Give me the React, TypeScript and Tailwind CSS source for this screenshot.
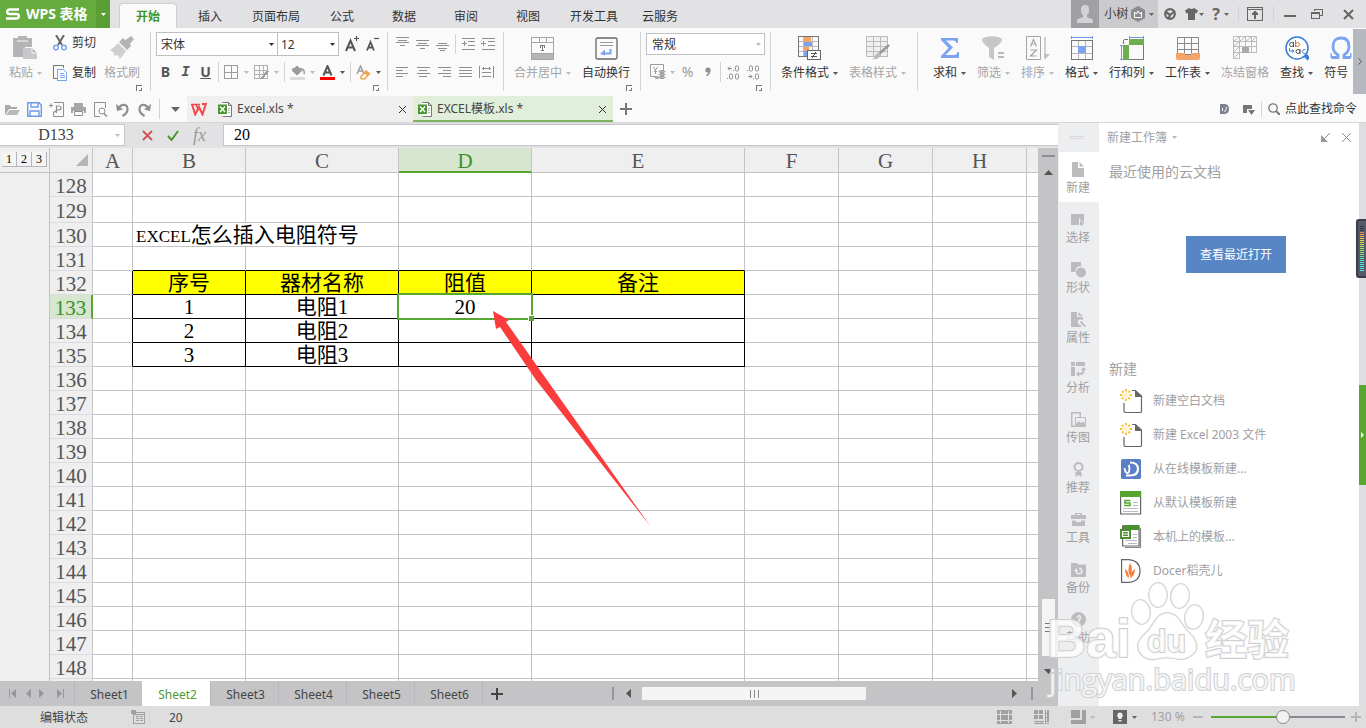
import React, { useState } from 'react';

interface IconProps {
  w?: number;
  h?: number;
  className?: string;
  crisp?: boolean;
  children: React.ReactNode;
}

const Icon: React.FC<IconProps> = ({ w = 15, h = 15, className = '', crisp = false, children }) => (
  <svg
    width={w}
    height={h}
    viewBox={`0 0 ${w} ${h}`}
    fill="none"
    stroke="currentColor"
    aria-hidden="true"
    shapeRendering={crisp ? 'crispEdges' : 'auto'}
    className={`shrink-0 ${className}`}
  >
    {children}
  </svg>
);

const Caret = ({ className = 'text-[#666]' }: { className?: string }) => (
  <svg width="5" height="3" viewBox="0 0 5 3" aria-hidden="true" className={`shrink-0 ${className}`}>
    <path d="M0 0h5L2.5 3z" fill="currentColor" />
  </svg>
);

const Sep = ({ className = 'h-5' }: { className?: string }) => <span className={`w-px shrink-0 bg-[#d3d3d5] ${className}`} />;

const Launcher = () => (
  <button aria-label="更多设置" className="absolute bottom-[5px] right-2 text-[#777]">
    <Icon w={6} h={6} crisp>
      <path d="M0 .5h6M.5 0v6M3 5.5h3M5.5 3v3" />
    </Icon>
  </button>
);

/* ---------- Title bar ---------- */

const menuTabs = [
  { label: '开始', cls: 'mr-[2px] w-[58px] rounded-t-sm border border-b-0 border-[#cfcfd2] bg-[#fafafa] font-bold text-[#3f9423]' },
  { label: '插入', cls: 'w-[62px]' },
  { label: '页面布局', cls: 'w-[70px]' },
  { label: '公式', cls: 'w-[62px]' },
  { label: '数据', cls: 'w-[62px]' },
  { label: '审阅', cls: 'w-[62px]' },
  { label: '视图', cls: 'w-[62px]' },
  { label: '开发工具', cls: 'w-[70px]' },
  { label: '云服务', cls: 'w-[62px]' },
];

const TitleBar = () => (
  <header className="flex h-7 shrink-0 bg-[#e2e2e4] text-[#333]">
    <button className="flex w-24 items-center gap-[6px] bg-[#66ab3e] pl-[6px] text-sm font-bold text-white">
      <Icon w={14} h={12}>
        <path d="M13 1.500H3.500Q1.200 1.500 1.200 3.700T3.500 6H10.500Q12.800 6 12.800 8.200T10.500 10.500H0" strokeWidth="2.400" />
      </Icon>
      WPS 表格
    </button>
    <button aria-label="应用菜单" className="flex w-[14px] items-center justify-center bg-[#5a9e35]">
      <Caret className="text-white" />
    </button>
    <nav className="ml-[9px] flex pt-[3px]">
      {menuTabs.map((t) => (
        <button key={t.label} className={`pt-0.5 text-xs ${t.cls}`}>
          {t.label}
        </button>
      ))}
    </nav>
    <div className="ml-auto flex items-center text-[#666]">
      <span className="flex h-7 w-7 items-end justify-center bg-[#a0a0a4] pb-[5px] text-[#d2d2d4]">
        <Icon w={16} h={18}>
          <path d="M4 4a4 4 0 0 1 8 0v3q-.5 2-2 3v2l6 2.500V18H0v-3.500L6 12v-2Q4.500 9 4 7z" fill="currentColor" stroke="none" />
        </Icon>
      </span>
      <button className="flex h-7 w-[59px] items-center bg-[#cbcbcd] pl-[5px] text-xs text-[#444]">
        小树
        <Icon w={14} h={16} className="ml-[3px] mr-1 text-[#8c8c90]">
          <path d="M7 0l7 4v8l-7 4-7-4V4z" fill="currentColor" stroke="none" />
          <path d="M3.500 6v5.500h7V6L8.700 8 7 5 5.300 8z" stroke="#fff" />
        </Icon>
        <Caret />
      </button>
      <button aria-label="云" className="ml-[6px]">
        <Icon w={12} h={12}>
          <circle cx="6" cy="6" r="4.800" strokeWidth="2.200" />
          <path d="M1 3.500l5 3.500 5-4M6 7l-1.500 4" strokeWidth="2.200" />
        </Icon>
      </button>
      <button aria-label="皮肤" className="ml-[9px] flex items-center gap-px">
        <Icon w={13} h={12}>
          <path d="M0 2.500L4 0q2.500 2 5 0l4 2.500-1.500 3L10 5v7H3V5l-1.500.5z" fill="currentColor" stroke="none" />
        </Icon>
        <Caret />
      </button>
      <button aria-label="帮助" className="ml-2 flex items-center gap-1 text-base leading-none font-bold">
        ?
        <Caret />
      </button>
      <Sep className="ml-[9px] h-4 bg-[#b0b0b3]" />
      <button aria-label="收起功能区" className="ml-2">
        <Icon w={16} h={14} crisp>
          <path d="M.5.5h15v13H.5zM0 2h16" />
          <path d="M8 12V5M5 8l3-3 3 3" strokeWidth="1.500" />
        </Icon>
      </button>
      <Sep className="ml-[10px] h-4 bg-[#b0b0b3]" />
      <button aria-label="最小化" className="ml-[10px]">
        <Icon w={12} h={12} crisp>
          <path d="M0 8h12" strokeWidth="2" />
        </Icon>
      </button>
      <button aria-label="还原" className="ml-[15px]">
        <Icon w={12} h={12} crisp>
          <path d="M3 3V1.500h8.500v6H9M.5 4.500h8v6h-8zM0 5h9" />
        </Icon>
      </button>
      <button aria-label="关闭" className="mr-3 ml-5">
        <Icon w={11} h={11}>
          <path d="M1 1l9 9M10 1l-9 9" strokeWidth="2" />
        </Icon>
      </button>
    </div>
  </header>
);

/* ---------- Ribbon ---------- */

interface BigButtonProps {
  label: string;
  caret?: boolean;
  disabled?: boolean;
  children: React.ReactNode;
}

const BigButton: React.FC<BigButtonProps> = ({ label, caret = true, disabled = false, children }) => (
  <button className={`flex shrink-0 flex-col items-center text-xs ${disabled ? 'text-[#a5a5a8]' : 'text-[#333]'}`}>
    <span className="flex h-[28px] items-center justify-center">{children}</span>
    <span className="flex h-[22px] items-center gap-1 whitespace-nowrap">
      {label}
      {caret && <Caret className={disabled ? 'text-[#bbb]' : 'text-[#555]'} />}
    </span>
  </button>
);

const Tool = ({ label, children }: { label: string; children: React.ReactNode }) => (
  <button aria-label={label} className="flex w-[15px] shrink-0 items-center justify-center text-[#8f8f92]">
    {children}
  </button>
);

const SplitTool = ({ label, dark = false, children }: { label: string; dark?: boolean; children: React.ReactNode }) => (
  <button aria-label={label} className="flex w-[25px] shrink-0 items-center justify-between text-[#9c9ca0]">
    {children}
    <Caret className={dark ? 'text-[#555]' : 'text-[#bbb]'} />
  </button>
);

const lineIcons = {
  top: 'M1 .5h13M3 3.500h9M1 5.500h13M5 8.500h5',
  middle: 'M1 3.500h13M3 6.500h9M1 8.500h13M5 11.500h5',
  bottom: 'M3 6.500h9M1 8.500h13M3 11.500h9M5 13.500h5',
  outdent: 'M1 1.500h13M7 4.500h7M7 8.500h7M1 12.500h13M1 6.500h5M3.500 4v5',
  indent: 'M1 1.500h13M7 4.500h7M7 8.500h7M1 12.500h13M0 6.500h5M2.500 4v5',
  left: 'M1 2.500h12M1 5.500h7M1 8.500h12M1 11.500h7',
  center: 'M1 2.500h13M3 5.500h8M1 8.500h13M3 11.500h8',
  right: 'M1 2.500h13M6 5.500h8M1 8.500h13M6 11.500h8',
  justify: 'M1 2.500h13M1 5.500h13M1 8.500h13M1 11.500h13',
  distribute: 'M.5 1v12M14.500 1v12M3 3.500h9M4.500 2v3M10.500 2v3M3 7.500h9M3 11.500h9',
};

const LineTool = ({ label, d }: { label: string; d: string }) => (
  <Tool label={label}>
    <Icon crisp>
      <path d={d} />
    </Icon>
  </Tool>
);

const Ribbon = () => (
  <div className="flex h-[68px] shrink-0 overflow-hidden bg-[#fafafa]">
    <section className="relative flex w-[150px] shrink-0 pt-[6px] pl-[9px]">
      <BigButton label="粘贴" disabled>
        <Icon w={25} h={24}>
          <path d="M0 2h5V0h9v2h5v9h-7v10H0z" fill="#b4b4b6" stroke="none" />
          <path d="M4 5h11" stroke="#fafafa" />
          <path d="M10 12h9l5 5v6H10z" fill="#c8c8ca" stroke="none" />
          <path d="M19 12v5h5" fill="#b4b4b6" stroke="#fafafa" />
        </Icon>
      </BigButton>
      <div className="ml-[11px] flex flex-col text-xs text-[#333]">
        <button className="flex h-[18px] items-center gap-[5px]">
          <Icon w={14} h={16}>
            <path d="M3 0l6 10M11 0L5 10" stroke="#666" strokeWidth="2" />
            <circle cx="3" cy="12.500" r="2.300" stroke="#7ba3f0" strokeWidth="1.500" />
            <circle cx="11" cy="12.500" r="2.300" stroke="#7ba3f0" strokeWidth="1.500" />
          </Icon>
          剪切
        </button>
        <button className="mt-[10px] flex h-[22px] items-center gap-[5px]">
          <Icon w={14} h={16} crisp>
            <path d="M10 2.500V.5H.5v13H4" stroke="#777" />
            <path d="M4.500 4.500h6l3 3v8h-9zM6.500 8.500h4M6.500 10.500h5M6.500 12.500h5" stroke="#7ba3f0" />
          </Icon>
          复制
        </button>
      </div>
      <div className="ml-2 flex">
        <BigButton label="格式刷" caret={false} disabled>
          <Icon w={24} h={24}>
            <path d="M17 3l4-3 3 3-4 5 1 2-4 4-8-8 4-4 2 2z" fill="#b4b4b6" stroke="none" />
            <path d="M8 7l8 8-6 8q-1-3-3-4l-3 1v-3l-4-3q4-2 8-7z" fill="#cfcfd1" stroke="none" />
          </Icon>
        </BigButton>
      </div>
      <Launcher />
    </section>
    <Sep className="mt-1 h-[59px]" />

    <section className="relative w-[236px] shrink-0 pt-[4px] pl-[5px]">
      <div className="flex items-center text-xs text-[#333]">
        <label className="relative flex h-6 w-[122px] items-center border border-[#bfbfc2] bg-white">
          <select aria-label="字体" className="h-full w-full appearance-none bg-transparent pt-0.5 pl-1 outline-none">
            <option>宋体</option>
          </select>
          <Caret className="absolute right-[3px]" />
        </label>
        <label className="relative flex h-6 w-[61px] items-center border border-l-0 border-[#bfbfc2] bg-white">
          <select aria-label="字号" className="h-full w-full appearance-none bg-transparent pt-0.5 pl-[3px] outline-none">
            <option>12</option>
          </select>
          <Caret className="absolute right-[3px]" />
        </label>
        <button aria-label="增大字号" className="ml-[6px] text-[#555]">
          <Icon w={15} h={16}>
            <path d="M1 15L5.500 4.500 10 15M3 11.500h5.500" strokeWidth="2" />
            <path d="M9 2.500h5M11.500 0v5" strokeWidth="1.200" />
          </Icon>
        </button>
        <button aria-label="减小字号" className="ml-[6px] text-[#555]">
          <Icon w={14} h={16}>
            <path d="M1 14.500L4.500 6 8 14.500M2.500 11.500h4" strokeWidth="1.800" />
            <path d="M8 2.500h5" strokeWidth="1.200" />
          </Icon>
        </button>
      </div>
      <div className="mt-1 flex h-6 items-center gap-[5px] pl-[2px] text-sm text-[#555]">
        <button className="w-[15px] font-bold">B</button>
        <button className="w-[15px] font-['Liberation_Mono',monospace] font-bold italic">I</button>
        <button className="w-[15px] font-bold underline">U</button>
        <Sep />
        <SplitTool label="边框">
          <Icon crisp>
            <path d="M.5.5h13v13H.5zM7 1v12M1 7h12" />
          </Icon>
        </SplitTool>
        <SplitTool label="绘图边框">
          <Icon crisp>
            <path d="M.5.5h13v13H.5zM5 0v14M9.500 0v14M0 5h14M0 9.500h14" stroke="#b0b0b3" />
            <path d="M7 14l7-8" strokeWidth="2" />
          </Icon>
        </SplitTool>
        <Sep />
        <SplitTool label="填充颜色">
          <Icon>
            <path d="M7 1l5 4.500-5 4.500-5-4.500z" fill="currentColor" />
            <path d="M2 4h10q3 1 2 5" strokeWidth="1.500" />
            <path d="M0 13.500h15" stroke="#dcdcde" strokeWidth="3" />
          </Icon>
        </SplitTool>
        <SplitTool label="字体颜色" dark>
          <Icon>
            <path d="M3.500 10.500L7.500 1l4 9.500M5 7.500h5" stroke="#555" strokeWidth="2" />
            <path d="M0 13.500h15" stroke="#f00" strokeWidth="3" />
          </Icon>
        </SplitTool>
        <Sep />
        <SplitTool label="清除" dark>
          <Icon>
            <path d="M1 9L4.500 1 8 9M2.500 6h4" strokeWidth="1.500" />
            <path d="M5 11.500L10 6l3.500 2.500-5 5.500-3.500-.5z" fill="#fff" stroke="#efa54f" strokeWidth="1.500" />
            <path d="M8 8l3.500 3 2-2.500L10 6z" fill="#efa54f" stroke="none" />
          </Icon>
        </SplitTool>
      </div>
      <Launcher />
    </section>
    <Sep className="mt-1 h-[59px]" />

    <section className="w-[115px] shrink-0 pt-1 pl-[7px]">
      <div className="flex h-6 items-center gap-[5px]">
        <LineTool label="顶端对齐" d={lineIcons.top} />
        <LineTool label="垂直居中" d={lineIcons.middle} />
        <LineTool label="底端对齐" d={lineIcons.bottom} />
        <Sep />
        <LineTool label="减少缩进" d={lineIcons.outdent} />
        <LineTool label="增加缩进" d={lineIcons.indent} />
      </div>
      <div className="mt-1 flex h-6 items-center gap-[6px]">
        <LineTool label="左对齐" d={lineIcons.left} />
        <LineTool label="居中" d={lineIcons.center} />
        <LineTool label="右对齐" d={lineIcons.right} />
        <LineTool label="两端对齐" d={lineIcons.justify} />
        <LineTool label="分散对齐" d={lineIcons.distribute} />
      </div>
    </section>
    <Sep className="mt-1 h-[59px]" />

    <section className="relative flex w-[136px] shrink-0 gap-[11px] pt-[6px] pl-[10px]">
      <BigButton label="合并居中" disabled>
        <Icon w={23} h={23} crisp>
          <path d="M1 16h21v6H1z" fill="#b4b4b6" stroke="none" />
          <path d="M.5.500h22v22H.5zM1 5.500h21M8.500 1v4M15.500 1v4M1 16h21" />
          <path d="M9 8.500h5M9.500 8v3M13.500 8v3M11.500 8v6M10 13.500h3" stroke="#777" />
        </Icon>
      </BigButton>
      <BigButton label="自动换行" caret={false}>
        <Icon w={23} h={23}>
          <rect x="1" y="1" width="21" height="21" rx="1.500" stroke="#666" strokeWidth="1.300" />
          <path d="M5 5.500h13M5 8.500h13" stroke="#999" />
          <path d="M15.500 12v4.500H9" stroke="#7ba3f0" strokeWidth="2" />
          <path d="M10 12.500v6L5 17z" fill="#7ba3f0" stroke="none" />
        </Icon>
      </BigButton>
      <Launcher />
    </section>
    <Sep className="mt-1 h-[59px]" />

    <section className="relative w-[129px] shrink-0 pt-[5px] pl-[5px]">
      <label className="relative flex h-[22px] w-[119px] items-center border border-[#bfbfc2] bg-white text-xs text-[#333]">
        <select aria-label="数字格式" className="h-full w-full appearance-none bg-transparent pt-0.5 pl-[5px] outline-none">
          <option>常规</option>
        </select>
        <Caret className="absolute right-[3px] text-[#bbb]" />
      </label>
      <div className="mt-[5px] flex h-6 items-center gap-[5px] pl-1">
        <SplitTool label="会计格式">
          <Icon w={16} h={16}>
            <path d="M6 12.500H.5V.5h13v6" />
            <path d="M3.500 3l2 3 2-3M5.500 6v4M4 7.500h3" />
            <ellipse cx="12" cy="7.500" rx="3" ry="1" fill="#bbb" />
            <ellipse cx="12" cy="10.500" rx="3" ry="1" fill="#bbb" />
            <ellipse cx="12" cy="13.500" rx="3" ry="1" fill="#bbb" />
            <ellipse cx="7" cy="13.500" rx="2" ry="1" fill="#bbb" />
          </Icon>
        </SplitTool>
        <button aria-label="百分比" className="w-[15px] text-sm text-[#999]">
          %
        </button>
        <Tool label="千位分隔">
          <Icon w={8} h={10}>
            <circle cx="4" cy="3" r="2.600" fill="currentColor" stroke="none" />
            <path d="M5.500 3Q6 7 2.500 8.500" strokeWidth="1.500" />
          </Icon>
        </Tool>
        <Sep />
        <Tool label="增加小数位">
          <Icon w={13} h={15}>
            <path d="M1 3.500h4M3 1.500l-2 2 2 2M6.500 5v1" />
            <rect x="8.500" y="1" width="3" height="5" rx="1.200" />
            <rect x="2.500" y="9" width="3" height="5" rx="1.200" />
            <rect x="8.500" y="9" width="3" height="5" rx="1.200" />
            <path d="M.5 13v1" />
          </Icon>
        </Tool>
        <Tool label="减少小数位">
          <Icon w={13} h={15}>
            <rect x="2.500" y="1" width="3" height="5" rx="1.200" />
            <rect x="8.500" y="1" width="3" height="5" rx="1.200" />
            <path d="M.5 5v1M1 11.500h4M3 9.500l2 2-2 2M6.500 13v1" />
            <rect x="8.500" y="9" width="3" height="5" rx="1.200" />
          </Icon>
        </Tool>
      </div>
      <Launcher />
    </section>
    <Sep className="mt-1 h-[59px]" />

    <section className="flex w-[146px] shrink-0 gap-[11px] pt-[6px] pl-[10px]">
      <BigButton label="条件格式">
        <Icon w={23} h={24} crisp>
          <path d="M5.500 0v20M14.500 0v20M0 5.500h20M0 10.500h20M0 15.500h20" stroke="#bbb" />
          <path d="M6 1h7v5H6z" fill="#f2a469" stroke="none" />
          <path d="M6 6h8v4H6z" fill="#7ba3f0" stroke="none" />
          <path d="M6 11h5v4H6z" fill="#f2a469" stroke="none" />
          <path d="M6 15h3v5H6z" fill="#7ba3f0" stroke="none" />
          <path d="M.5.5h20v20H.5z" stroke="#777" />
          <path d="M9.500 14.500h13v9h-13z" fill="#fff" stroke="#666" />
          <path d="M13 17.500h6M13 20.500h6M18 16l-4 6" stroke="#555" />
        </Icon>
      </BigButton>
      <BigButton label="表格样式" disabled>
        <Icon w={24} h={24}>
          <path d="M.5.5h21v20H.5zM0 5.500h22M0 10.500h22M0 15.500h22M7.500 0v20M14.500 0v20" stroke="#bbb" fill="#f0f0f0" />
          <path d="M23 9L13 18" stroke="#999" strokeWidth="2.500" />
          <path d="M13 16l2 3q-2 5-9 4 3-1 3-4z" fill="#bbb" stroke="none" />
        </Icon>
      </BigButton>
    </section>
    <Sep className="mt-1 h-[59px]" />

    <section className="flex shrink-0 gap-[11px] pt-[6px] pl-[15px]">
      <BigButton label="求和">
        <Icon w={20} h={22}>
          <path d="M1 1h17v5h-1.500Q16 3.500 13 3.500H6l7 7-7.500 7.500H14q3 0 3.500-3H19v6H1v-2l7.500-8L1 3z" fill="#7ba3f0" stroke="none" />
        </Icon>
      </BigButton>
      <BigButton label="筛选" disabled>
        <Icon w={23} h={24}>
          <ellipse cx="10" cy="3.500" rx="10" ry="3.300" fill="#c6c6c8" stroke="none" />
          <path d="M0 4q1 4 7 8v9l5 3V12q7-4 8-8z" fill="#c6c6c8" stroke="none" />
          <path d="M16 17h6M16 21h6" strokeWidth="1.500" />
        </Icon>
      </BigButton>
      <BigButton label="排序" disabled>
        <Icon w={24} h={24}>
          <path d="M.5.5h14v23H.5z" />
          <path d="M4.500 10.500l3-7 3 7M5.500 8h4M4.500 14h6l-6 6h6" strokeWidth="1.200" />
          <path d="M19 1v21" strokeWidth="1.500" stroke="#c0c0c2" />
          <path d="M18.500 18h5.500l-5.500 6z" fill="#c0c0c2" stroke="none" />
        </Icon>
      </BigButton>
      <BigButton label="格式">
        <Icon w={22} h={24} crisp>
          <path d="M0 1.500h22M.5 0v3M21.500 0v3" stroke="#6f99e8" />
          <path d="M7.500 4v20M14.500 4v20M0 10.500h22M0 17.500h22" stroke="#b5b5b7" />
          <path d="M7 10h8v7H7z" fill="#7ba3f0" stroke="none" />
          <path d="M.5 4.500h21v19H.5z" stroke="#777" />
        </Icon>
      </BigButton>
      <BigButton label="行和列">
        <Icon w={24} h={24} crisp>
          <path d="M9 1.500h15M9.500 0v3M23.500 0v3M1.500 9v15M0 9.500h3M0 23.500h3" stroke="#6f99e8" />
          <path d="M9 3h15v6H9zM3 9h6v15H3z" fill="#6fae4e" stroke="none" />
          <path d="M3.500 8V5q0-1.500 1.500-1.500h3M23.500 9v14.500H9" stroke="#777" />
        </Icon>
      </BigButton>
      <BigButton label="工作表">
        <Icon w={24} h={24}>
          <path d="M1.500 1.500h21v17h-21zM8.500 1v17M15.500 1v17M1 7.500h22M1 13.500h22" stroke="#8a8a8d" />
          <path d="M0 17h9v2h6v-2h9v5q0 2-2 2H2q-2 0-2-2z" fill="#f2a469" stroke="none" />
        </Icon>
      </BigButton>
      <BigButton label="冻结窗格" caret={false} disabled>
        <Icon w={24} h={24}>
          <path d="M.5.5h23v16H6.500v6H.5zM6.500 0v22M12.500 0v16M18.500 0v16M0 5.500h24M0 10.500h24M0 16.500h24" stroke="#bcbcbe" />
          <path d="M1 5l5-4M7 5l5-4M13 5l5-4M19 5l4-4M1 10l5-4M1 16l5-5M1 22l5-5" stroke="#bcbcbe" />
          <path d="M9 11h7v6H9z" fill="#aaa" stroke="none" />
        </Icon>
      </BigButton>
      <BigButton label="查找">
        <Icon w={24} h={25}>
          <path d="M19 18l5 5" stroke="#3b7dd8" strokeWidth="4" />
          <circle cx="12" cy="12" r="11" stroke="#3b7dd8" strokeWidth="1.500" fill="#fff" />
          <circle cx="6.500" cy="8.500" r="2" stroke="#555" />
          <path d="M8.500 6v5" stroke="#555" />
          <circle cx="12.500" cy="8.500" r="2" stroke="#d9772b" />
          <path d="M10.500 4v7" stroke="#d9772b" />
          <circle cx="13" cy="15.500" r="2" stroke="#555" />
          <path d="M15 13v5" stroke="#555" />
          <path d="M20.500 13.800a2 2 0 1 0 0 3.400M4.500 12v3h4M7 13.500l2 1.500-2 1.500" stroke="#3b7dd8" />
        </Icon>
      </BigButton>
      <BigButton label="符号" caret={false}>
        <Icon w={24} h={24} className="overflow-visible">
          <path
            d="M7.500 21.500H14V19q-5-3-5-8.500Q9 2 17 2t8 8.500q0 5.500-5 8.500v2.500h6.500"
            stroke="#7ba3f0"
            strokeWidth="2.800"
          />
          <path d="M7.200 22v-5M26.800 22v-5" stroke="#7ba3f0" strokeWidth="1.400" />
        </Icon>
      </BigButton>
    </section>
    <button aria-label="向右滚动" className="mt-px ml-auto flex h-[65px] w-[13px] shrink-0 items-center justify-center bg-[#b6b8c0]">
      <Icon w={4} h={7}>
        <path d="M.5.500l3 3-3 3" stroke="#555" />
      </Icon>
    </button>
  </div>
);

/* ---------- Quick access and document tabs ---------- */

const XlsIcon = () => (
  <Icon w={14} h={15}>
    <path d="M4.500.5h6l3 3v11h-9M10.500.5v3h3" stroke="#777" fill="#fff" />
    <path d="M10 6.500h2M10 8.500h2M10 10.500h2" stroke="#aaa" />
    <path d="M0 2.500h9v9.500H0z" fill="#4a9332" stroke="none" />
    <path d="M2 4.500l5 5.500M7 4.500L2 10" stroke="#fff" strokeWidth="1.400" />
  </Icon>
);

const CloseMark = () => (
  <Icon w={7} h={7}>
    <path d="M0 0l7 7M7 0L0 7" stroke="#333" />
  </Icon>
);

const DocumentBar = () => (
  <div className="flex h-[26px] shrink-0 bg-[#fafafa] text-xs">
    <div className="flex w-[187px] shrink-0 items-center gap-[7px] pl-[5px] text-[#9a9a9d]">
      <Tool label="打开">
        <Icon>
          <path d="M0 13V3h5l1 2h6v2H4z" fill="#aaa" stroke="none" />
          <path d="M4.500 8H15l-3 5H1z" fill="#b8b8ba" stroke="none" />
        </Icon>
      </Tool>
      <Tool label="保存">
        <Icon className="text-[#6f99e8]">
          <path d="M.7.7H12l2.300 2.300v11.300H.7zM4 1v4h7V1M3 14V9h9v5" strokeWidth="1.400" />
        </Icon>
      </Tool>
      <Tool label="输出为PDF">
        <Icon>
          <path d="M5 .5h9.500v14h-10v-5M0 3.500h4M2 1.500v4" />
          <path d="M7.500 11V4h2q2.500 0 2.500 2t-2.500 2h-2q-1 2-3 2.500" strokeWidth="1.200" />
        </Icon>
      </Tool>
      <Tool label="打印">
        <Icon>
          <path d="M3 1h9v4H3zM0 5h15v6h-2V9H2v2H0z" fill="#a6a6a9" stroke="none" />
          <path d="M3.500 9.500h8v4h-8z" />
        </Icon>
      </Tool>
      <Tool label="打印预览">
        <Icon>
          <path d="M7 14.500H1.500V.5h11V6" />
          <circle cx="9" cy="9" r="3" />
          <path d="M11 11.500l3 3" strokeWidth="1.500" />
        </Icon>
      </Tool>
      <Tool label="撤销">
        <Icon>
          <path d="M3 6l4-3q5-1 5.500 3.500T7.500 14" strokeWidth="2.200" />
          <path d="M1 2l1 7 6-1.500z" fill="currentColor" stroke="none" />
        </Icon>
      </Tool>
      <Tool label="重做">
        <Icon>
          <path d="M12 6L8 3Q3 2 2.500 6.500T7.500 14" strokeWidth="2.200" />
          <path d="M14 2l-1 7-6-1.500z" fill="currentColor" stroke="none" />
        </Icon>
      </Tool>
      <Sep />
      <button aria-label="自定义快速访问" className="pl-1 text-[#666]">
        <Icon w={9} h={5}>
          <path d="M0 0h9L4.500 5z" fill="currentColor" stroke="none" />
        </Icon>
      </button>
    </div>
    <button aria-label="WPS首页" className="flex w-[26px] items-center bg-[#efefef] pl-1">
      <Icon w={16} h={13} className="text-[#f04a4a]">
        <path d="M1.200 2l3 9.500L8 4l3.500 7.500L14.800 1H11" strokeWidth="2" />
        <path d="M0 1.500h9M5 2l3 5" strokeWidth="1.600" />
      </Icon>
    </button>
    <div className="flex w-[200px] items-center gap-[5px] bg-[#efefef] pr-[7px] pl-[5px] text-[#444]">
      <XlsIcon />
      <a href="#excel">Excel.xls *</a>
      <button aria-label="关闭 Excel.xls" className="ml-auto">
        <CloseMark />
      </button>
    </div>
    <div className="flex w-[200px] items-center gap-[5px] border-b-2 border-[#7eb160] bg-[#e1eeda] pt-0.5 pr-[7px] pl-[5px] text-[#444]">
      <XlsIcon />
      <a href="#template">EXCEL模板.xls *</a>
      <button aria-label="关闭 EXCEL模板.xls" className="ml-auto">
        <CloseMark />
      </button>
    </div>
    <button aria-label="新建文档" className="ml-[7px] text-[#777]">
      <Icon w={12} h={12} crisp>
        <path d="M6 0v12M0 6h12" strokeWidth="2" />
      </Icon>
    </button>
    <div className="ml-auto flex items-center pr-[9px] text-[#777]">
      <button aria-label="稻壳">
        <Icon w={9} h={10}>
          <path d="M0 0h4q5 0 5 5t-5 5H0z" fill="#7c8090" stroke="none" />
          <path d="M2.500 7V4M4.500 8q2-2 2-5" stroke="#fff" />
        </Icon>
      </button>
      <button aria-label="任务窗格" className="ml-[14px]">
        <Icon w={12} h={11}>
          <path d="M0 1h9v4H4v4H0z" fill="currentColor" stroke="none" />
          <path d="M5 6h7L8.500 11z" fill="currentColor" stroke="none" />
        </Icon>
      </button>
      <Sep className="mr-[6px] ml-[6px] h-4" />
      <button className="flex items-center gap-[5px] text-[#333]">
        <Icon w={12} h={12}>
          <circle cx="5" cy="5" r="4.200" stroke="#777" strokeWidth="1.300" />
          <path d="M8 8l4 4" stroke="#777" strokeWidth="2" />
        </Icon>
        点此查找命令
      </button>
    </div>
  </div>
);

/* ---------- Sheet ---------- */

const FormulaBar = () => {
  const [value, setValue] = useState('20');
  return (
    <div className="flex h-[26px] shrink-0 border-t border-[#d6d6d9] bg-[#e2e2e4] pt-px pb-[2px] font-['Liberation_Serif'] text-base">
      <label className="relative flex w-[125px] items-center border border-l-0 border-[#c6c6c9] bg-white">
        <input aria-label="名称框" defaultValue="D133" className="w-full bg-transparent pr-3 text-center text-[#444] outline-none" />
        <Caret className="absolute right-1 text-[#bbb]" />
      </label>
      <div className="flex w-[98px] items-center gap-[14px] pl-[17px]">
        <button aria-label="取消">
          <Icon w={11} h={11}>
            <path d="M1 1l9 9M10 1l-9 9" stroke="#cf5350" strokeWidth="1.800" />
          </Icon>
        </button>
        <button aria-label="确认">
          <Icon w={12} h={11}>
            <path d="M1 6l3.500 4L11 1" stroke="#4a9332" strokeWidth="2" />
          </Icon>
        </button>
        <button className="text-lg leading-none text-[#999] italic">fx</button>
      </div>
      <input
        aria-label="编辑栏"
        value={value}
        onChange={(e) => setValue(e.target.value)}
        className="min-w-0 flex-1 border border-r-0 border-[#c6c6c9] bg-white pl-[10px] text-black outline-none"
      />
    </div>
  );
};

const columns = ['A', 'B', 'C', 'D', 'E', 'F', 'G', 'H', ''];
const rows = Array.from({ length: 21 }, (_, i) => 128 + i);

const cells: Record<string, string> = {
  B132: '序号',
  C132: '器材名称',
  D132: '阻值',
  E132: '备注',
  B133: '1',
  C133: '电阻1',
  D133: '20',
  B134: '2',
  C134: '电阻2',
  B135: '3',
  C135: '电阻3',
};

const inTable = (col: string, row: number) => 'BCDE'.includes(col) && col !== '' && row >= 132 && row <= 135;

const cellClass = (col: string, row: number) => {
  const boxed = inTable(col, row);
  const bottom = boxed || inTable(col, row + 1) ? 'border-b-black' : 'border-b-[#c3c3c5]';
  const right = boxed || (col === 'A' && row >= 132 && row <= 135) ? 'border-r-black' : 'border-r-[#c3c3c5]';
  const fill = boxed && row === 132 ? 'bg-[#ffff00]' : '';
  return `relative border-r border-b p-0 text-center whitespace-nowrap ${bottom} ${right} ${fill}`;
};

const Grid = () => (
  <table className="w-full table-fixed border-separate border-spacing-0 bg-white font-['Liberation_Serif','Noto_Sans_CJK_SC',serif] text-[21px] leading-5 text-black">
    <colgroup>
      <col className="w-[43px]" />
      <col className="w-[40px]" />
      <col className="w-[113px]" />
      <col className="w-[153px]" />
      <col className="w-[133px]" />
      <col className="w-[213px]" />
      <col className="w-[94px]" />
      <col className="w-[94px]" />
      <col className="w-[94px]" />
      <col />
    </colgroup>
    <thead>
      <tr className="h-[25px] bg-[#efefef] text-[#555]">
        <th className="border-r border-b border-[#c3c3c5] p-0">
          <Icon w={12} h={12} className="mr-1 ml-auto">
            <path d="M12 0v12H0z" fill="#b5b5b7" stroke="none" />
          </Icon>
        </th>
        {columns.map((c) => (
          <th
            key={c}
            className={`border-r p-0 pt-0.5 font-normal ${
              c === 'D' ? 'border-b-2 border-r-[#c3c3c5] border-b-[#5aa632] bg-[#d6e6cf] text-[#3a8f2a]' : 'border-b border-[#c3c3c5]'
            }`}
          >
            {c}
          </th>
        ))}
      </tr>
    </thead>
    <tbody>
      {rows.map((r) => (
        <tr key={r} className={r === 129 ? 'h-[26px]' : 'h-6'}>
          <th
            className={`border-b border-b-[#dcdcde] p-0 pt-0.5 font-normal ${
              r === 133 ? 'border-r-2 border-r-[#5aa632] bg-[#d6e6cf] text-[#3a8f2a]' : 'border-r border-r-[#c3c3c5] bg-[#efefef] text-[#555]'
            }`}
          >
            {r}
          </th>
          {columns.map((c) => {
            if (r === 130 && c === 'C') return null;
            if (r === 130 && c === 'B') {
              return (
                <td key={c} colSpan={2} className="border-r border-b border-[#c3c3c5] p-0 pl-[3px] whitespace-nowrap">
                  <span className="text-[17px] leading-4">EXCEL</span>怎么插入电阻符号
                </td>
              );
            }
            return (
              <td key={c} className={cellClass(c, r)}>
                {cells[`${c}${r}`]}
                {c === 'D' && r === 133 && (
                  <>
                    <span className="absolute -inset-0.5 z-10 border-2 border-[#5aa632]" />
                    <span className="absolute -right-[3px] -bottom-[3px] z-10 h-[6px] w-[6px] border-t border-l border-white bg-[#5aa632]" />
                  </>
                )}
              </td>
            );
          })}
        </tr>
      ))}
      <tr className="h-6">
        <th className="border-r border-[#c3c3c5] bg-[#efefef] p-0" />
        {columns.map((c) => (
          <td key={c} className="border-r border-[#c3c3c5] p-0" />
        ))}
      </tr>
    </tbody>
  </table>
);

const VerticalScroll = () => (
  <div className="flex w-[19px] shrink-0 flex-col items-center bg-[#c4c4c6] text-[#555]">
    <span className="mt-[7px] h-[2px] w-[13px] bg-[#8f8f92]" />
    <Icon w={9} h={5} className="mt-[13px]">
      <path d="M0 5h9L4.500 0z" fill="currentColor" stroke="none" />
    </Icon>
    <div className="mt-auto flex h-[57px] w-[13px] flex-col items-center justify-center gap-[3px] bg-[#f4f4f4]">
      <span className="h-px w-[7px] bg-[#777]" />
      <span className="h-px w-[7px] bg-[#777]" />
      <span className="h-px w-[7px] bg-[#777]" />
    </div>
    <Icon w={9} h={5} className="mt-[13px] mb-[7px]">
      <path d="M0 0h9L4.500 5z" fill="currentColor" stroke="none" />
    </Icon>
  </div>
);

const SheetArea = () => (
  <div className="relative flex min-h-0 flex-1">
    <aside className="w-[50px] shrink-0 border-r border-[#c3c3c5] bg-[#efefef]">
      <div className="flex h-[25px] items-start border-b border-[#c3c3c5] pt-1 pl-[2px]">
        {['1', '2', '3'].map((n) => (
          <button key={n} className="h-[15px] w-[15px] border-r border-b border-[#b5b5b7] bg-[#f4f4f4] font-['Liberation_Serif'] text-xs leading-none text-black">
            {n}
          </button>
        ))}
      </div>
    </aside>
    <div className="min-w-0 flex-1 overflow-hidden bg-white">
      <Grid />
    </div>
    <VerticalScroll />
    {/* Red pointer arrow drawn over the selected cell */}
    <svg width="160" height="218" viewBox="0 0 160 218" className="pointer-events-none absolute top-[162px] left-[492px] z-20" aria-hidden="true">
      <path d="M1 1L17 10l-3 2 41 58 103.500 146.500L44 70 8 17l-4 2z" fill="#fa3c3c" />
    </svg>
  </div>
);

const SheetTabs = () => {
  const [active, setActive] = useState('Sheet2');
  return (
    <div className="flex h-[25px] shrink-0 bg-[#c4c4c6] text-xs">
      <div className="flex w-[74px] shrink-0 items-center pl-[9px] text-[#97979a]">
        <Icon w={7} h={9}>
          <path d="M.5 0v9" />
          <path d="M7 0v9L2 4.500z" fill="currentColor" stroke="none" />
        </Icon>
        <Icon w={5} h={9} className="ml-[10px]">
          <path d="M5 0v9L0 4.500z" fill="currentColor" stroke="none" />
        </Icon>
        <Icon w={5} h={9} className="ml-2">
          <path d="M0 0v9l5-4.500z" fill="currentColor" stroke="none" />
        </Icon>
        <Icon w={7} h={9} className="ml-[13px]">
          <path d="M6.500 0v9" />
          <path d="M0 0v9l5-4.500z" fill="currentColor" stroke="none" />
        </Icon>
      </div>
      {['Sheet1', 'Sheet2', 'Sheet3', 'Sheet4', 'Sheet5', 'Sheet6'].map((s) => (
        <button
          key={s}
          onClick={() => setActive(s)}
          className={`w-[68px] shrink-0 border-l pt-0.5 pl-0.5 ${s === active ? 'border-white bg-white text-[#4f9a2d]' : 'border-[#b8b8ba] text-[#444]'}`}
        >
          {s}
        </button>
      ))}
      <button aria-label="新建工作表" className="w-[30px] border-l border-[#b8b8ba] pl-2 text-[#444]">
        <Icon w={12} h={12} crisp>
          <path d="M6 0v12M0 6h12" strokeWidth="2" />
        </Icon>
      </button>
      <div className="ml-auto flex w-[446px] items-center text-[#555]">
        <span className="h-[13px] w-[2px] bg-[#97979a]" />
        <Icon w={5} h={9} className="ml-3">
          <path d="M5 0v9L0 4.500z" fill="currentColor" stroke="none" />
        </Icon>
        <div className="ml-[11px] flex h-[13px] w-[224px] items-center justify-center gap-[3px] bg-[#f4f4f4]">
          <span className="h-2 w-px bg-[#888]" />
          <span className="h-2 w-px bg-[#888]" />
          <span className="h-2 w-px bg-[#888]" />
        </div>
        <Icon w={5} h={9} className="mr-[14px] ml-auto">
          <path d="M0 0v9l5-4.500z" fill="currentColor" stroke="none" />
        </Icon>
        <span className="mr-[25px] h-[13px] w-[2px] bg-[#97979a]" />
      </div>
    </div>
  );
};

/* ---------- Task pane ---------- */

const paneTabs = [
  { label: '新建', icon: <path d="M1 0h6v6h6v9H1zM8.500 0L13 4.500H8.500z" /> },
  { label: '选择', icon: <path d="M0 2h13v9.500L8 6v7H0zM9 8l4 4h-2l2 1.500H9z" /> },
  { label: '形状', icon: <path d="M0 0h10v4q-6 0-5.500 6H0zM10 5.500a5 5 0 1 1 0 10 5 5 0 1 1 0-10z" /> },
  { label: '属性', icon: <path d="M0 0h6v5h6v3q-5-2-5.500 2 .5 3 3 3l1 2H0zM7.500 0L12 4H7.500zM9 10l2-1 1 2 3 3-1 1-4-3z" /> },
  { label: '分析', icon: <path d="M0 0h4v4H0zM5 0h9v4H5zM0 5h4v9H0zM8 9v2h1q2.500 0 2.500-3H10l2.500-3L15 8h-1.500q0 5-4.500 5H8v2l-3-3z" /> },
  {
    label: '传图',
    icon: <path fillRule="evenodd" d="M0 0h10v5H8.500V1.500h-7v12H4V15H0zM4 5h11v10H4zM5 6v6l3-3 2 2 2-1.500 2 2V6z" />,
  },
  { label: '推荐', icon: <path fillRule="evenodd" d="M7.500 0a5 5 0 1 1 0 10 5 5 0 1 1 0-10zm0 2a3 3 0 1 0 0 6 3 3 0 1 0 0-6zM4.500 10h6v5l-3-2-3 2z" /> },
  { label: '工具', icon: <path fillRule="evenodd" d="M4 1h7v2h4v4H0V3h4zM5.500 2v1h4V2zM1 8.500h4V10h5V8.500h4V14H1z" /> },
  {
    label: '备份',
    icon: <path fillRule="evenodd" d="M0 1h6l1 1.500h8V15H0zM4.500 9H3l2-3 2 3H6a2 2 0 1 0 2-2V5.500A3.500 3.500 0 1 1 4.500 9z" />,
  },
  { label: '帮助', icon: <path fillRule="evenodd" d="M7.500 0a7.500 7.500 0 1 1 0 15 7.500 7.500 0 1 1 0-15zM5 6h1.500q0-2 1.500-1.500t0 2L7 8v2h1.500V8.500Q11 7 10 4.500T7.500 3 5 6zM7 11v1.500h1.500V11z" /> },
];

const NewDocIcon = () => (
  <Icon w={23} h={24}>
    <path d="M4 14v8q0 1.500 1.500 1.500h15q1 0 1-1.500V7l-6-5.500H12" stroke="#666" strokeWidth="1.200" />
    <path d="M15 1v7h7z" fill="#666" stroke="none" />
    <circle cx="6" cy="6" r="2.800" fill="#fdf3cf" stroke="none" />
    <path d="M6 0v2.500M6 9.500V12M0 6h2.500M9.500 6H12M2 2l1.500 1.500M8.500 8.500L10 10M10 2L8.500 3.500M2 10l1.500-1.500" stroke="#fbbf2d" strokeWidth="1.800" />
  </Icon>
);

const newItems = [
  { label: '新建空白文档', icon: <NewDocIcon /> },
  { label: '新建 Excel 2003 文件', icon: <NewDocIcon /> },
  {
    label: '从在线模板新建...',
    icon: (
      <Icon w={23} h={24}>
        <rect x="1" y="2" width="20" height="20" rx="1.500" fill="#5b7fc7" stroke="none" />
        <path d="M10 5.500q8 0 8 6.500t-8 6.500H6" stroke="#fff" strokeWidth="2.200" />
        <path d="M4.500 11q.5 5 4 5.500M8.500 8q2 3 0 8" stroke="#fff" strokeWidth="1.800" />
      </Icon>
    ),
  },
  {
    label: '从默认模板新建',
    icon: (
      <Icon w={23} h={24}>
        <path d="M.6 1h20v22h-20z" stroke="#666" strokeWidth="1.200" fill="#fff" />
        <path d="M0 0h21v6H0z" fill="#55a630" stroke="none" />
        <path d="M10.500 9.500H5v2.500h5v2.500H4" stroke="#55a630" strokeWidth="1.600" />
        <path d="M13 11.500h5M13 14.500h5M3 17.500h15M3 20.500h15" stroke="#bbb" />
      </Icon>
    ),
  },
  {
    label: '本机上的模板...',
    icon: (
      <Icon w={23} h={24}>
        <path d="M20.500 3v19.500H5" stroke="#888" strokeWidth="1.200" />
        <path d="M2.600 1h16.500v20H2.600z" stroke="#666" strokeWidth="1.200" fill="#fff" />
        <path d="M3 0h16v5H3zM0 4h11v10H0z" fill="#4a8f30" stroke="none" />
        <path d="M2.500 6.500h6v5h-6zM2.500 9h6" stroke="#fff" strokeWidth="1.200" />
        <path d="M13 9.500h4M13 12.500h4M5 15.500h12M8 18.500h9" stroke="#bbb" />
      </Icon>
    ),
  },
  {
    label: 'Docer稻壳儿',
    icon: (
      <Icon w={23} h={24}>
        <path d="M1.600.6H9q11 1 11 11.400T9 23.400H1.600z" stroke="#666" strokeWidth="1.200" fill="#fff" />
        <path d="M10 4q4 6 0 13-3-6 0-13zM5 10q4 2 4 9-4-2-4-9zM15 10q0 7-5 9 0-6 5-9z" fill="#f58240" stroke="none" />
      </Icon>
    ),
  },
];

const meterColors = [
  '#333846', '#333846', '#333846', '#ee8a4e', '#eda04a', '#ecb44a', '#ecc84c', '#e6d64e', '#dde050', '#cfe456', '#bfe55e', '#abe567',
  '#98e472', '#86e380', '#77e292', '#6ce1a8', '#62e0bc', '#5adfce', '#56dfdc', '#55e0e2', '#55e0e2', '#55e0e2', '#55e0e2',
];

const TaskPane = () => (
  <div className="relative flex w-[308px] shrink-0 border-t border-[#d6d6d9]">
    <div className="w-[41px] shrink-0 bg-[#edeef0] text-xs text-[#a0a0a3]">
      <div className="flex h-[29px] flex-col items-center justify-center gap-px pr-1">
        <span className="h-px w-[15px] bg-[#dadadc]" />
        <span className="h-px w-[15px] bg-[#dadadc]" />
      </div>
      {paneTabs.map((t, i) => (
        <button key={t.label} className={`ml-px flex h-[50px] w-10 flex-col items-center pt-[10px] pr-0.5 ${i === 0 ? 'bg-white' : ''}`}>
          <svg width="15" height="16" viewBox="0 0 15 16" fill="#bcbcbe" aria-hidden="true">
            {t.icon}
          </svg>
          <span className="leading-5">{t.label}</span>
        </button>
      ))}
    </div>
    <div className="min-w-0 flex-1 bg-white text-xs text-[#a0a0a3]">
      <div className="flex h-[29px] items-center pr-2 pl-2">
        <button className="flex items-center gap-[5px]">
          新建工作簿
          <Caret className="text-[#bbb]" />
        </button>
        <button aria-label="浮动窗格" className="ml-auto">
          <Icon w={9} h={9}>
            <path d="M9 0L3 6" stroke="#888" />
            <path d="M0 2v7h7z" fill="#999" stroke="none" />
          </Icon>
        </button>
        <button aria-label="关闭窗格" className="ml-3">
          <Icon w={9} h={9}>
            <path d="M0 0l9 9M9 0L0 9" stroke="#888" />
          </Icon>
        </button>
      </div>
      <h2 className="pt-[10px] pl-[10px] text-sm leading-5">最近使用的云文档</h2>
      <div className="mt-[54px] flex justify-center pl-[14px]">
        <button className="h-[37px] w-[100px] bg-[#5785c5] text-white">查看最近打开</button>
      </div>
      <h2 className="mt-[86px] pl-[10px] text-sm leading-5">新建</h2>
      <ul className="mt-[5px] pl-[21px]">
        {newItems.map((item) => (
          <li key={item.label}>
            <a href="#new" className="flex h-[34px] items-center gap-[10px]">
              {item.icon}
              {item.label}
            </a>
          </li>
        ))}
      </ul>
    </div>
    <div className="relative w-[7px] shrink-0 bg-[#dedee0]">
      <button aria-label="收起窗格" className="absolute top-[262px] left-0 flex h-[100px] w-[7px] items-center justify-center bg-[#5aa632]">
        <Icon w={3} h={6}>
          <path d="M0 0v6l3-3z" fill="#fff" stroke="none" />
        </Icon>
      </button>
      <div className="absolute top-[96px] right-0 flex h-[59px] w-[10px] flex-col gap-px rounded-l-[3px] border-2 border-r-0 border-[#3a3e4c] bg-[#555a68] pt-[5px] pl-[2px]">
        {meterColors.map((c, i) => (
          <span key={i} className="h-px w-1" style={{ backgroundColor: c }} />
        ))}
      </div>
    </div>
  </div>
);

/* ---------- Status bar ---------- */

const StatusBar = () => {
  const [zoom, setZoom] = useState(130);
  return (
    <footer className="flex h-[22px] shrink-0 items-center bg-[#dededf] text-xs text-[#444]">
      <span className="ml-10 w-[91px] pt-px">编辑状态</span>
      <Icon w={15} h={15} className="text-[#a0a0a3]" crisp>
        <path d="M2.500 2.500h11v11h-11zM5 6.500h3M9 6.500h3M5 8.500h3M9 8.500h3M5 10.500h3M9 10.500h3M3 4.500h10" />
        <path d="M0 0h5v4H0z" fill="currentColor" stroke="none" />
      </Icon>
      <Sep className="ml-[3px] h-3 bg-[#999]" />
      <span className="ml-[19px] pt-px">20</span>
      <div className="ml-auto flex items-center pr-[5px] text-[#a0a0a3]">
        <button aria-label="普通视图">
          <Icon w={15} h={14} crisp>
            <path d="M0 0h15v14H0z" fill="currentColor" stroke="none" />
            <path d="M3.500 1v12M11.500 1v12M0 4.500h15M0 10.500h15" stroke="#dededf" />
          </Icon>
        </button>
        <button aria-label="分页预览" className="ml-[22px]">
          <Icon w={15} h={14} crisp>
            <path d="M0 0h9v9H0zM11 0h4v14h-4zM0 11h10v3H0z" fill="currentColor" stroke="none" />
            <path d="M4.500 0v9M0 4.500h9" stroke="#dededf" />
            <path d="M12.500 0v14M0 12.500h15" stroke="#dededf" strokeDasharray="3 1" />
          </Icon>
        </button>
        <button aria-label="冻结" className="ml-[22px] flex items-center gap-1">
          <Icon w={15} h={14} crisp>
            <path d="M0 0h9v8H0zM11 0h4v14H0v-4h11z" fill="currentColor" stroke="none" />
          </Icon>
          <Caret className="text-[#bbb]" />
        </button>
        <button aria-label="护眼模式" className="ml-[18px] flex items-center gap-[5px]">
          <Icon w={14} h={14}>
            <path d="M0 0h14v14H0z" fill="#666" stroke="none" />
            <path d="M7 2.500a3 3 0 0 1 1.500 5.500v1h-3V8A3 3 0 0 1 7 2.500zM5.500 10h3v1.500h-3z" fill="#eee" stroke="none" />
          </Icon>
          <Caret />
        </button>
        <span className="ml-[14px] w-[42px] whitespace-nowrap">{zoom} %</span>
        <button aria-label="缩小" onClick={() => setZoom(Math.max(10, zoom - 10))}>
          <Icon w={10} h={10} crisp>
            <path d="M0 5h10" strokeWidth="2" stroke="#b5b5b7" />
          </Icon>
        </button>
        <input
          type="range"
          aria-label="显示比例"
          min={10}
          max={230}
          value={zoom}
          onChange={(e) => setZoom(Number(e.target.value))}
          className="mr-[6px] ml-2 h-[2px] w-[134px] appearance-none bg-[linear-gradient(to_right,#5aa632_55%,#8a8a92_55%)] outline-none [&::-webkit-slider-thumb]:h-[14px] [&::-webkit-slider-thumb]:w-[14px] [&::-webkit-slider-thumb]:appearance-none [&::-webkit-slider-thumb]:rounded-full [&::-webkit-slider-thumb]:border [&::-webkit-slider-thumb]:border-[#888] [&::-webkit-slider-thumb]:bg-[#f2f2f2]"
        />
        <button aria-label="放大" onClick={() => setZoom(Math.min(230, zoom + 10))}>
          <Icon w={10} h={10} crisp>
            <path d="M5 0v10M0 5h10" strokeWidth="2" stroke="#b5b5b7" />
          </Icon>
        </button>
      </div>
    </footer>
  );
};

/* Semi-transparent site stamp in the lower right corner */
const Stamp = () => (
  <svg
    width="250"
    height="128"
    viewBox="0 0 250 128"
    aria-hidden="true"
    className="pointer-events-none absolute right-[71px] bottom-[22px] z-30 font-['Open_Sans','Noto_Sans_CJK_SC',sans-serif]"
    fill="#fff"
    fillOpacity="0.75"
    stroke="#d0d0d2"
    strokeWidth="2"
    paintOrder="stroke"
  >
    <ellipse cx="113" cy="17" rx="9" ry="12" />
    <ellipse cx="135" cy="18" rx="9" ry="12" transform="rotate(8 135 18)" />
    <ellipse cx="96" cy="34" rx="9" ry="12" transform="rotate(-8 96 34)" />
    <ellipse cx="149" cy="39" rx="9" ry="12" transform="rotate(10 149 39)" />
    <path d="M122 35q9 0 15 11 4 6 11 13 7 11 0 17-7 6-14 5-12-3-24 0-8 1-13-4-8-8 0-18 7-6 11-13 6-11 14-11z" />
    <text x="2" y="79" fontSize="54" fontWeight="700" className="font-['Liberation_Sans']">
      Bai
    </text>
    <text x="102" y="74" fontSize="32" fontWeight="700" className="font-['Liberation_Sans']">
      du
    </text>
    <text x="160" y="77" fontSize="42" fontWeight="700">
      经验
    </text>
    <text x="4" y="112" fontSize="29">
      jingyan.baidu.com
    </text>
  </svg>
);

const App: React.FC = () => (
  <div className="relative flex h-screen flex-col overflow-hidden bg-[#e2e2e4] font-['Noto_Sans','Noto_Sans_CJK_SC',sans-serif]">
    <TitleBar />
    <Ribbon />
    <DocumentBar />
    <main className="flex min-h-0 flex-1">
      <div className="flex min-w-0 flex-1 flex-col">
        <FormulaBar />
        <SheetArea />
        <SheetTabs />
      </div>
      <TaskPane />
    </main>
    <StatusBar />
    <Stamp />
  </div>
);

export default App;
